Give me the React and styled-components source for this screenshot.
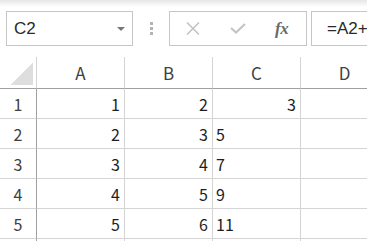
import React from 'react';
import styled, {createGlobalStyle} from 'styled-components';

const GlobalStyle = createGlobalStyle`
    html, body {
        margin:0;
        padding:0;
        background:#fff;
        overflow:hidden;
    }
`;

const Page = styled.div`
    width:367px;
    height:241px;
    overflow:hidden;
    background:linear-gradient(#e6e6e6 0px, #ffffff 7px);
    font-family:"Liberation Sans", Arial, sans-serif;
`;

const Toolbar = styled.div`
    display:flex;
    align-items:center;
    height:35px;
    padding:11px 0 0 6px;
`;

const NameBox = styled.div`
    box-sizing:border-box;
    width:127px;
    height:35px;
    border:1px solid #c6c6c6;
    background:#fff;
    display:flex;
    align-items:center;
    justify-content:space-between;
    padding:0 7px 0 7px;
    font-size:17px;
    color:#2a2a2a;
`;

const Caret = styled.span`
    width:0;
    height:0;
    border-left:4px solid transparent;
    border-right:4px solid transparent;
    border-top:4px solid #777;
    margin-top:1px;
`;

const Grip = styled.div`
    width:36px;
    display:flex;
    flex-direction:column;
    align-items:center;
    gap:2px;
`;

const GripDot = styled.span`
    width:3px;
    height:3px;
    background:#b3b3b3;
`;

const ToolBox = styled.div`
    box-sizing:border-box;
    width:138px;
    height:35px;
    border:1px solid #c6c6c6;
    display:flex;
    align-items:center;
    padding-left:16px;
    gap:30px;
`;

const FxLabel = styled.span`
    font-family:"Liberation Serif", "DejaVu Serif", serif;
    font-style:italic;
    font-weight:bold;
    font-size:17px;
    color:#6a6a6a;
    margin-left:-1px;
    letter-spacing:-0.5px;
`;

const FormulaBar = styled.div`
    box-sizing:border-box;
    flex:1;
    height:35px;
    margin-left:4px;
    border:1px solid #c6c6c6;
    border-right:none;
    display:flex;
    align-items:center;
    padding-left:15px;
    font-size:17px;
    color:#2a2a2a;
    white-space:nowrap;
    overflow:hidden;
`;

const Sheet = styled.div`
    margin-top:11px;
    display:grid;
    grid-template-columns:37px repeat(4, 88px);
    grid-template-rows:32px repeat(6, 30px);
    font-family:"Noto Sans CJK JP", "Noto Sans", sans-serif;
    font-size:16px;
    color:#1e1e1e;
`;

const Cell = styled.div`
    box-sizing:border-box;
    border-right:1px solid #d4d4d4;
    border-bottom:1px solid #d4d4d4;
    display:flex;
    align-items:center;
    justify-content:${p => (p.$right ? 'flex-end' : 'flex-start')};
    padding:0 ${p => (p.$right ? '4px' : '0')} 0 ${p => (p.$right ? '0' : '3px')};
    white-space:nowrap;
    overflow:hidden;
`;

const Corner = styled(Cell)`
    position:relative;
    border-bottom-color:#a0a0a0;
`;

const CornerMark = styled.span`
    position:absolute;
    right:3px;
    bottom:3px;
    width:22px;
    height:22px;
    background:linear-gradient(to bottom right, transparent 50%, #dedede 50%);
`;

const ColHead = styled(Cell)`
    justify-content:center;
    padding:0;
    border-bottom-color:#a0a0a0;
    color:#404040;
    font-size:17px;
`;

const RowHead = styled(Cell)`
    justify-content:center;
    padding:0;
    border-right-color:#a0a0a0;
    color:#404040;
`;

const columns = ['A', 'B', 'C', 'D'];

const rows = [
    [{v: '1', r: true}, {v: '2', r: true}, {v: '3', r: true}, {v: ''}],
    [{v: '2', r: true}, {v: '3', r: true}, {v: '5'}, {v: ''}],
    [{v: '3', r: true}, {v: '4', r: true}, {v: '7'}, {v: ''}],
    [{v: '4', r: true}, {v: '5', r: true}, {v: '9'}, {v: ''}],
    [{v: '5', r: true}, {v: '6', r: true}, {v: '11'}, {v: ''}],
];

const CancelIcon = () => (
    <svg width="14" height="13" viewBox="0 0 14 13">
        <path d="M1 0.5 L13 12.5 M13 0.5 L1 12.5" stroke="#c4c4c4" strokeWidth="1.6" fill="none" />
    </svg>
);

const CheckIcon = () => (
    <svg width="16" height="11" viewBox="0 0 16 11">
        <path d="M1 5 L6 9.5 L15 1" stroke="#c4c4c4" strokeWidth="2.2" fill="none" />
    </svg>
);

const App = () => (
    <Page>
        <GlobalStyle />
        <Toolbar>
            <NameBox>
                C2
                <Caret />
            </NameBox>
            <Grip>
                <GripDot />
                <GripDot />
                <GripDot />
            </Grip>
            <ToolBox>
                <CancelIcon />
                <CheckIcon />
                <FxLabel>fx</FxLabel>
            </ToolBox>
            <FormulaBar>=A2+B2</FormulaBar>
        </Toolbar>
        <Sheet>
            <Corner>
                <CornerMark />
            </Corner>
            {columns.map(c => (
                <ColHead key={c}>{c}</ColHead>
            ))}
            {rows.map((row, i) => (
                <React.Fragment key={i}>
                    <RowHead>{i + 1}</RowHead>
                    {row.map((cell, j) => (
                        <Cell key={j} $right={cell.r}>
                            {cell.v}
                        </Cell>
                    ))}
                </React.Fragment>
            ))}
            <RowHead />
            {columns.map(c => (
                <Cell key={c} />
            ))}
        </Sheet>
    </Page>
);

export default App;
